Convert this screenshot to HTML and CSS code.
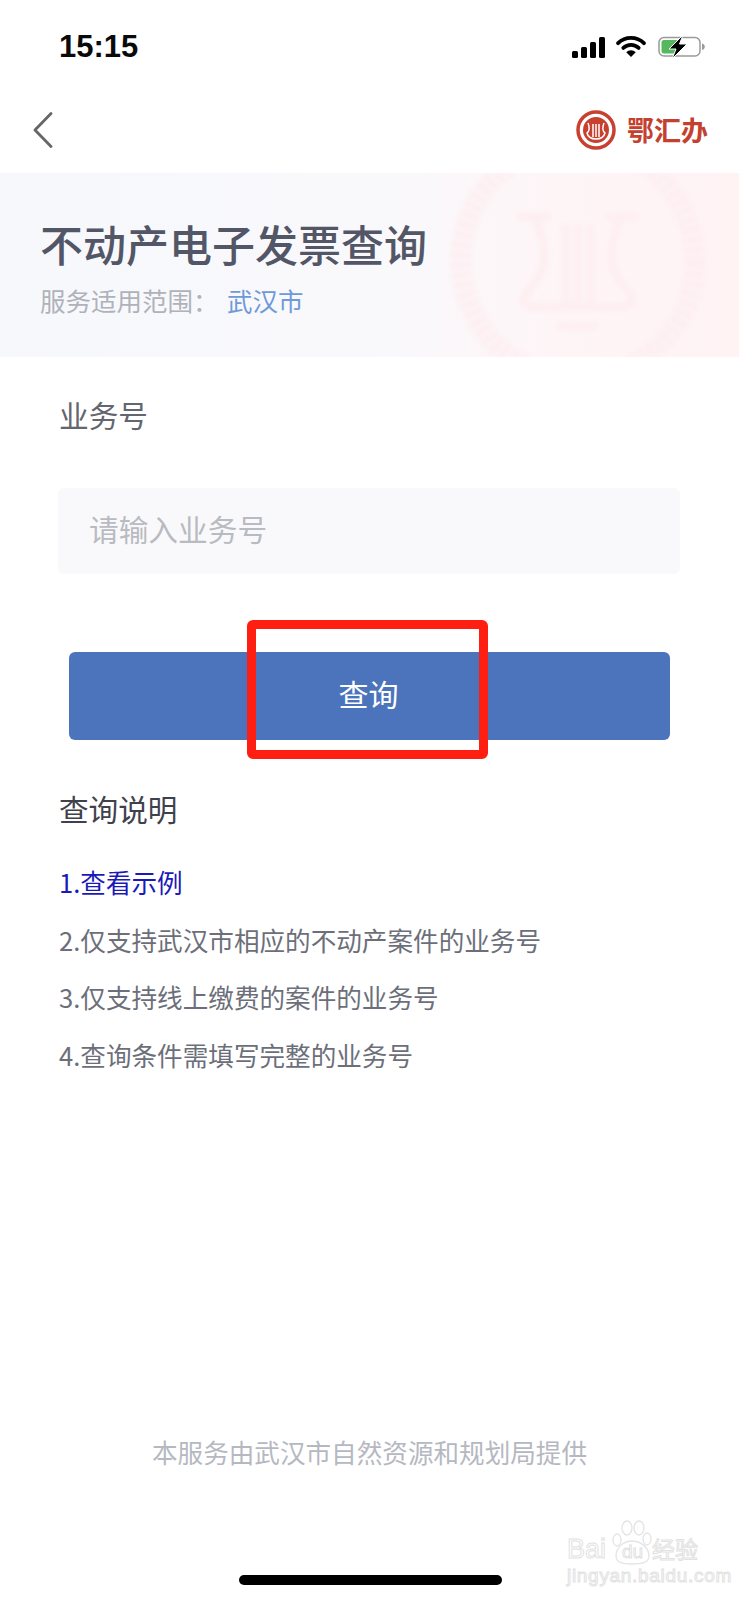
FILE: index.html
```html
<!DOCTYPE html>
<html lang="zh">
<head>
<meta charset="utf-8">
<title>不动产电子发票查询</title>
<link rel="stylesheet" href="styles.css">
</head>
<body>
<div class="page">
  <div class="status">
    <span class="time">15:15</span>
    <div class="status-icons">
      <svg class="sig" width="33" height="21" viewBox="0 0 33 21"><rect x="0" y="14" width="6" height="7" rx="1.5"/><rect x="9" y="10" width="6" height="11" rx="1.5"/><rect x="18" y="5" width="6" height="16" rx="1.5"/><rect x="27" y="0" width="6" height="21" rx="1.5"/></svg>
      <svg class="wifi" width="30" height="22" viewBox="0 0 31 23"><path d="M2 8.500a19.500 19.500 0 0 1 27 0" fill="none" stroke="#000" stroke-width="4" stroke-linecap="round"/><path d="M7.500 13.500a11.500 11.500 0 0 1 16 0" fill="none" stroke="#000" stroke-width="4" stroke-linecap="round"/><path d="M15.500 23l-5-5a7 7 0 0 1 10 0z"/></svg>
      <svg class="batt" width="47" height="24" viewBox="0 0 47 24"><rect x="1" y="2.500" width="41" height="18.500" rx="5" fill="none" stroke="#9a9a9a" stroke-width="1.500"/><rect x="3.500" y="5" width="17" height="13.500" rx="2.500" fill="#56b85c"/><path d="M44 8.500c2 .6 2.800 1.800 2.800 3.200s-.8 2.600-2.800 3.200z" fill="#9a9a9a"/><path d="M25 0L11 14h7L14 24l15-15h-7.500z" fill="#000" stroke="#fff" stroke-width="1"/></svg>
    </div>
  </div>
  <header class="nav">
    <svg class="back" width="20" height="36" viewBox="0 0 20 36"><path d="M18 1.500L2 18l16 16.500" fill="none" stroke="#666" stroke-width="2.800" stroke-linecap="round" stroke-linejoin="round"/></svg>
    <div class="brand">
      <svg class="seal" width="40" height="40" viewBox="0 0 40 40">
        <circle cx="20" cy="20" r="18" fill="none" stroke="#c8402f" stroke-width="3.500"/>
        <circle cx="20" cy="20" r="13" fill="#c8402f"/>
        <path d="M12 13c2 5 1.500 8-1 10 1 4 5 6 9 6s8-2 9-6c-2.500-2-3-5-1-10M17 14v13M20 14v13M23 14v13" fill="none" stroke="#fff" stroke-width="1.500"/>
      </svg>
      <span class="brand-name">鄂汇办</span>
    </div>
  </header>
  <section class="banner">
    <svg class="emblem" width="299" height="184" viewBox="0 0 299 184">
      <g fill="none" stroke="#fdeef1">
        <circle cx="138" cy="88" r="117" stroke-width="20" stroke-dasharray="7 3"/>
        <path d="M78 44h32M96 46c12 30 10 48 0 62-12 14-22 26 4 26h76c26 0 16-12 4-26-10-14-12-32 0-62M166 44h32M126 52v78M138 52v78M150 52v78M118 153h40" stroke-width="8"/>
      </g>
    </svg>
    <h1 class="title">不动产电子发票查询</h1>
    <p class="scope"><span class="scope-label">服务适用范围：</span><span class="scope-city">武汉市</span></p>
  </section>
  <main class="form">
    <label class="field-label">业务号</label>
    <div class="input">请输入业务号</div>
    <div class="submit-wrap">
      <button class="submit">查询</button>
      <div class="highlight"></div>
    </div>
    <h2 class="notes-title">查询说明</h2>
    <ul class="notes">
      <li class="link">1.查看示例</li>
      <li>2.仅支持武汉市相应的不动产案件的业务号</li>
      <li>3.仅支持线上缴费的案件的业务号</li>
      <li>4.查询条件需填写完整的业务号</li>
    </ul>
  </main>
  <footer class="provider">本服务由武汉市自然资源和规划局提供</footer>
  <div class="home-bar"></div>
  <div class="watermark">
    <svg class="paw" width="40" height="46" viewBox="0 0 40 46"><g fill="none" stroke="#e4e4e4" stroke-width="1.300"><ellipse cx="15" cy="8" rx="5" ry="7"/><ellipse cx="27" cy="8" rx="5" ry="7"/><ellipse cx="35" cy="19" rx="4" ry="6"/><ellipse cx="5" cy="20" rx="4" ry="6"/><path d="M4 36c0-9 8-15 16-15s17 6 17 15c0 7-8 8-17 8s-16-1-16-8z"/></g></svg>
    <div class="wm-top"><span class="wm-bai">Bai</span><span class="wm-du">du</span><span class="wm-jy">经验</span></div>
    <div class="wm-url">jingyan.baidu.com</div>
  </div>
</div>
</body>
</html>
```
FILE: styles.css
```css
* { box-sizing: border-box; }
html, body { margin: 0; padding: 0; background: #fff; }
body { font-family: "Noto Sans CJK SC", "Noto Sans", sans-serif; }
.page { position: relative; width: 739px; height: 1600px; overflow: hidden; background: #fff; }

.status { height: 96px; padding: 31px 34px 0 59px; display: flex; justify-content: space-between; align-items: flex-start; }
.time { font-family: "Liberation Sans", sans-serif; font-weight: 700; font-size: 31px; line-height: 32px; color: #0a0a0a; }
.status-icons { display: flex; align-items: flex-start; gap: 11px; padding-top: 5px; }
.sig { fill: #000; margin-top: 1px; }
.wifi { margin-top: -1px; }
.batt { margin-top: -1px; margin-left: 1px; }

.nav { height: 77px; padding: 0 31px 10px 33px; display: flex; justify-content: space-between; align-items: center; }
.back { display: block; }
.brand { display: flex; align-items: center; gap: 11px; }
.seal { display: block; }
.brand-name { font-family: "Noto Sans CJK SC", sans-serif; font-weight: 700; font-size: 27px; line-height: 40px; color: #c4402f; }

.banner { position: relative; height: 184px; padding: 38px 40px 0; overflow: hidden; background: linear-gradient(90deg, #f7f8fc 0%, #f9f9fc 50%, #fef5f7 75%, #fff3f4 100%); }
.emblem { position: absolute; right: 0; top: 0; filter: blur(2px); }
.title { position: relative; margin: 0; font-size: 43px; line-height: 64px; font-weight: 500; color: #525667; }
.scope { position: relative; margin: 6px 0 0; font-size: 25.500px; line-height: 38px; white-space: nowrap; }
.scope-label { color: #b0b2ba; display: inline-block; width: 187px; }
.scope-city { color: #6f9ad8; }

.form { padding: 36px 59px 0; }
.field-label { display: block; font-size: 29.700px; line-height: 44px; color: #63666f; }
.input { margin-top: 51px; margin-left: -1px; height: 86px; border-radius: 6px; background: #f9f9fb; padding-left: 31px; font-size: 29.700px; line-height: 82px; color: #b9bbc2; }
.submit-wrap { position: relative; margin: 78px 10px 0; height: 88px; }
.submit { display: block; width: 100%; height: 88px; padding: 0 2px 6px 0; border: 0; border-radius: 6px; background: #4c74bd; color: #fff; font: inherit; font-size: 30px; }
.highlight { position: absolute; left: 178px; top: -32px; width: 241px; height: 139px; border: 9.500px solid #ff1f12; border-radius: 6px; }
.notes-title { margin: 47px 0 0; font-size: 29.600px; line-height: 44px; font-weight: 400; color: #3f424d; }
.notes { list-style: none; margin: 32px 0 0; padding: 0; font-size: 25.600px; line-height: 38px; color: #6c6f7a; }
.notes li { margin-bottom: 19.500px; }
.notes .link { color: #1a1ab8; }

.provider { position: absolute; left: 0; right: 0; top: 1434px; text-align: center; font-size: 25.600px; line-height: 36px; color: #b6b8c1; }
.home-bar { position: absolute; left: 239px; top: 1575px; width: 263px; height: 10px; border-radius: 5px; background: #000; }

.watermark { position: absolute; left: 566px; top: 1518px; width: 140px; height: 70px; color: #fff; -webkit-text-stroke: 1px #e2e2e2; }
.paw { position: absolute; left: 46px; top: 2px; }
.wm-top { position: absolute; left: 1px; top: 17px; display: flex; align-items: baseline; font-family: "Liberation Sans", sans-serif; font-size: 27px; line-height: 26px; white-space: nowrap; }
.wm-bai { width: 55px; }
.wm-du { font-size: 19px; width: 30px; }
.wm-jy { font-family: "Noto Sans CJK SC", sans-serif; font-size: 23px; }
.wm-url { position: absolute; left: 1px; top: 48px; font-family: "Liberation Sans", sans-serif; font-size: 19px; letter-spacing: .7px; line-height: 20px; white-space: nowrap; }
```
